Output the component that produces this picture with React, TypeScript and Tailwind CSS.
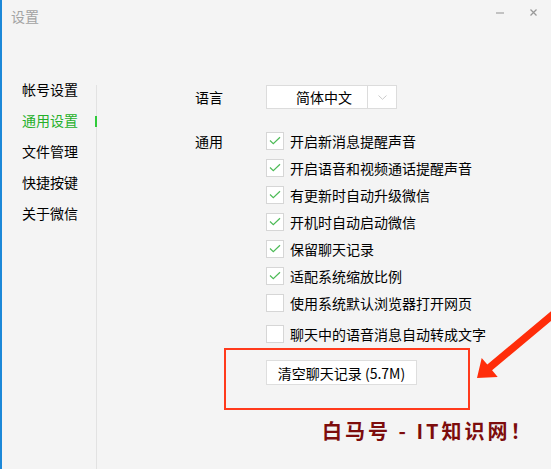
import React from "react";

const menu = ["帐号设置", "通用设置", "文件管理", "快捷按键", "关于微信"];

const options = [
  { label: "开启新消息提醒声音", checked: true },
  { label: "开启语音和视频通话提醒声音", checked: true },
  { label: "有更新时自动升级微信", checked: true },
  { label: "开机时自动启动微信", checked: true },
  { label: "保留聊天记录", checked: true },
  { label: "适配系统缩放比例", checked: true },
  { label: "使用系统默认浏览器打开网页", checked: false },
];

const CheckBox = ({ checked }: { checked: boolean }) => (
  <span className="w-[18px] h-[18px] shrink-0 border border-[#d6d6d6] bg-white flex items-center justify-center">
    {checked && (
      <svg width="12" height="9" viewBox="0 0 12 9" fill="none">
        <path d="M1 4.5 L4.3 7.6 L11 1.2" stroke="#4dbb57" strokeWidth="1.2" />
      </svg>
    )}
  </span>
);

const App = () => {
  return (
    <div className="relative w-[551px] h-[469px] overflow-hidden bg-[#f4f4f4] border-l-2 border-[#1c88d8] text-black font-['Noto_Sans_CJK_SC',sans-serif]">
      {/* title bar */}
      <div className="h-[73px] flex items-start justify-between">
        <div className="pl-[9px] pt-[7px] text-[14px] leading-[18px] text-[#a3a3a3]">设置</div>
        <div className="mt-[9px] pr-[14px] h-[7px] flex items-center gap-[26px]">
          <span className="w-[8px] h-[2px] bg-[#c2c2c2]" />
          <svg width="7" height="7" viewBox="0 0 7 7">
            <path d="M0.5 0.5 L6.5 6.5 M6.5 0.5 L0.5 6.5" stroke="#999" strokeWidth="1.3" />
          </svg>
        </div>
      </div>

      <div className="flex h-[396px]">
        {/* sidebar */}
        <div className="w-[94px] pl-[20px]">
          {menu.map((m, i) => (
            <div
              key={m}
              className={`h-[31px] flex items-center text-[14px] leading-[14px] ${
                i === 1 ? "text-[#25b02a]" : "text-black"
              }`}
            >
              {m}
            </div>
          ))}
        </div>
        <div className="relative w-px mt-[12px] bg-[#e2e2e2]">
          <span className="absolute -left-px top-[31px] w-[2px] h-[11px] bg-[#2fcb3a]" />
        </div>

        {/* content */}
        <div className="flex-1 pl-[98px] text-[14px] leading-[14px]">
          <div className="mt-[12px] flex items-center h-[24px]">
            <div className="w-[71px]">语言</div>
            <div className="w-[131px] h-[24px] border border-[#dcdcdc] bg-white flex">
              <div className="w-[100px] pl-[29px] flex items-center">简体中文</div>
              <div className="flex-1 border-l border-[#dcdcdc] flex items-center justify-center">
                <svg width="9" height="5" viewBox="0 0 9 5" fill="none">
                  <path d="M0.5 0.5 L4.5 4.3 L8.5 0.5" stroke="#cacaca" strokeWidth="1" />
                </svg>
              </div>
            </div>
          </div>

          <div className="mt-[18px] flex">
            <div className="w-[71px] h-[27px] flex items-center">通用</div>
            <div className="flex flex-col">
              {options.map((o) => (
                <div key={o.label} className="h-[27px] flex items-center gap-[6px]">
                  <CheckBox checked={o.checked} />
                  <span>{o.label}</span>
                </div>
              ))}
              <div className="mt-[4px] h-[27px] flex items-center gap-[6px]">
                <CheckBox checked={false} />
                <span>聊天中的语音消息自动转成文字</span>
              </div>
            </div>
          </div>

          <div className="mt-[1px] ml-[29px] w-[246px] h-[62px] border-2 border-[#ff3a1c] pl-[40px] pt-[10px]">
            <button className="w-[151px] h-[25px] border border-[#dedede] bg-white text-[14px] leading-[14px] flex items-center justify-center">
              清空聊天记录 (5.7M)
            </button>
          </div>

          <div className="mt-[11px] ml-[127px] text-[20px] leading-[20px] font-bold tracking-[3px] text-[#7d0c0c] whitespace-nowrap">
            白马号 - IT知识网！
          </div>
        </div>
      </div>

      {/* annotation arrow */}
      <svg
        className="absolute top-0 left-0 pointer-events-none"
        width="549"
        height="469"
        viewBox="2 0 549 469"
      >
        <polygon
          points="477,378 481.7,357.9 487.3,364.5 556.3,306.7 561.1,312.5 492.1,370.3 497.7,376.9"
          fill="#ff2d0a"
        />
      </svg>
    </div>
  );
};

export default App;
